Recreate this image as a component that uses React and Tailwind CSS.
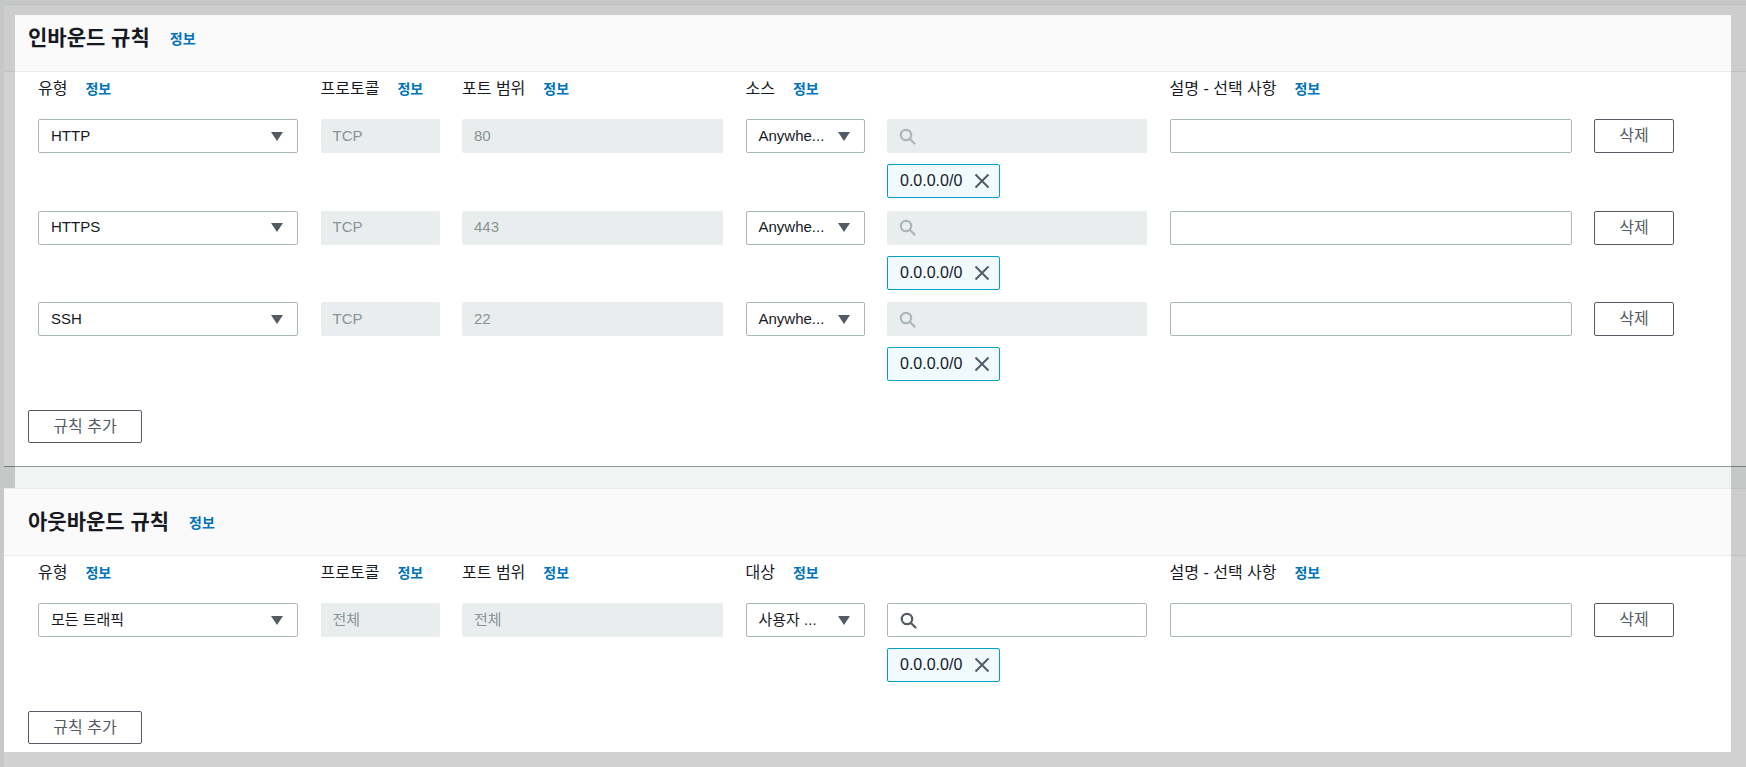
const INBOUND = [
  { type: 'HTTP', proto: 'TCP', port: '80' },
  { type: 'HTTPS', proto: 'TCP', port: '443' },
  { type: 'SSH', proto: 'TCP', port: '22' },
];

const GRID = 'grid grid-cols-[260px_119px_261px_119px_260px_402px_80px] gap-x-[22.5px]';

function Caret() {
  return (
    <svg width="12" height="9" viewBox="0 0 12 9" className="flex-shrink-0">
      <path d="M0 0h12L6 9z" fill="#545b64" />
    </svg>
  );
}

function SearchIcon({ color }) {
  return (
    <svg width="17" height="17" viewBox="0 0 17 17" fill="none" stroke={color} strokeWidth="2.2">
      <circle cx="7" cy="7" r="5.2" />
      <path d="M11 11l4.5 4.5" strokeLinecap="round" />
    </svg>
  );
}

function Info({ className = '' }) {
  return <a className={`text-[14px] font-bold text-[#0073bb] ${className}`}>정보</a>;
}

function Label({ text }) {
  return (
    <div className="flex items-center gap-[18px] h-[20px]">
      <span className="text-[16px] text-[#16191f]">{text}</span>
      <Info />
    </div>
  );
}

function Select({ value }) {
  return (
    <div className="h-[34px] border border-[#aab7b8] rounded-[2px] bg-white flex items-center justify-between pl-[12px] pr-[14px]">
      <span className="text-[15px] text-[#16191f] whitespace-nowrap">{value}</span>
      <Caret />
    </div>
  );
}

function Disabled({ value }) {
  return (
    <div className="h-[34px] rounded-[2px] bg-[#eaeded] flex items-center pl-[12px] text-[15px] text-[#879596]">
      {value}
    </div>
  );
}

function Chip() {
  return (
    <div className="mt-[11px] h-[34px] w-fit flex items-center border border-[#00a1c9] bg-[#f1faff] rounded-[2px] pl-[12px] pr-[9px] gap-[12px]">
      <span className="text-[16px] text-[#16191f]">0.0.0.0/0</span>
      <svg width="16" height="16" viewBox="0 0 16 16" fill="none" stroke="#545b64" strokeWidth="2">
        <path d="M1.5 1.5l13 13M14.5 1.5l-13 13" />
      </svg>
    </div>
  );
}

function SourceCell({ disabled }) {
  return (
    <div>
      <div
        className={`h-[34px] rounded-[2px] flex items-center pl-[12px] ${
          disabled ? 'bg-[#eaeded]' : 'bg-white border border-[#aab7b8] pl-[11px]'
        }`}
      >
        <SearchIcon color={disabled ? '#aab7b8' : '#545b64'} />
      </div>
      <Chip />
    </div>
  );
}

function Row({ type, proto, port, src, disabledSearch }) {
  return (
    <div className={GRID}>
      <Select value={type} />
      <Disabled value={proto} />
      <Disabled value={port} />
      <Select value={src} />
      <SourceCell disabled={disabledSearch} />
      <div className="h-[34px] border border-[#aab7b8] rounded-[2px] bg-white" />
      <button className="h-[34px] border border-[#545b64] rounded-[2px] bg-white text-[16px] text-[#545b64]">
        삭제
      </button>
    </div>
  );
}

function Panel({ title, sourceLabel, children }) {
  return (
    <div className="ml-[4px] bg-white border-t border-[#eaeded] border-b border-b-[#8f9a9b]">
      <div className="h-[67px] bg-[#fafafa] border-b border-[#eaeded] flex items-center px-[24px]">
        <h2 className="text-[21px] font-bold text-[#16191f]">{title}</h2>
        <Info className="ml-[20px] mt-[2px]" />
      </div>
      <div className="px-[24px] pt-[7px] pb-[23px]">
        <div className="pl-[10px]">
          <div className={GRID}>
            <Label text="유형" />
            <Label text="프로토콜" />
            <Label text="포트 범위" />
            <div className="col-span-2">
              <Label text={sourceLabel} />
            </div>
            <Label text="설명 - 선택 사항" />
            <div />
          </div>
          <div className="mt-[20px] flex flex-col gap-[12.5px]">{children}</div>
        </div>
        <button className="mt-[29px] h-[33px] w-[114px] border border-[#545b64] rounded-[2px] bg-white text-[16px] text-[#545b64]">
          규칙 추가
        </button>
      </div>
    </div>
  );
}

export default function App() {
  return (
    <div
      className="relative h-[767px] overflow-hidden bg-[#f2f3f3] pt-[4px]"
      style={{ fontFamily: "'Liberation Sans', 'Noto Sans CJK KR', sans-serif" }}
    >
      <Panel title="인바운드 규칙" sourceLabel="소스">
        {INBOUND.map((r) => (
          <Row key={r.type} type={r.type} proto={r.proto} port={r.port} src="Anywhe..." disabledSearch />
        ))}
      </Panel>

      <div className="h-[21px]" />

      <Panel title="아웃바운드 규칙" sourceLabel="대상">
        <Row type="모든 트래픽" proto="전체" port="전체" src="사용자 ..." />
      </Panel>

      {/* dimmed edges over the page */}
      <div className="absolute left-0 top-0 w-full h-[15px] bg-black/[0.18]" />
      <div className="absolute left-0 top-[15px] w-[15px] h-[473px] bg-black/[0.18]" />
      <div className="absolute left-0 top-[488px] w-[4px] h-[264px] bg-black/[0.18]" />
      <div className="absolute right-0 top-[15px] w-[15px] h-[737px] bg-black/[0.18]" />
      <div className="absolute left-0 bottom-0 w-full h-[15px] bg-black/[0.18]" />
    </div>
  );
}
